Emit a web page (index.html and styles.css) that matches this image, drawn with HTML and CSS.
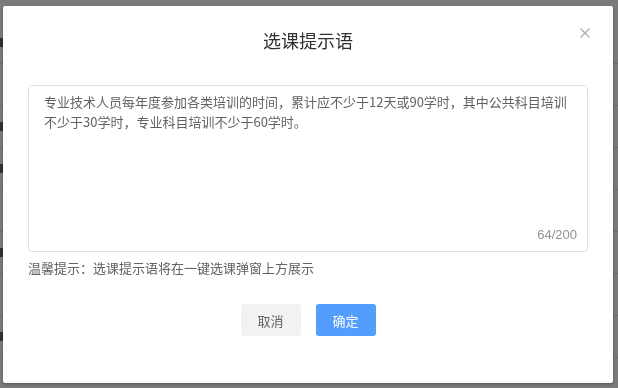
FILE: index.html
```html
<!DOCTYPE html>
<html lang="zh-CN">
<head>
  <meta charset="UTF-8" />
  <title>选课提示语</title>
  <link rel="stylesheet" href="styles.css">
</head>
<body>

  <div class="page">
    <div class="row"><i class="mark"></i></div>
    <div class="row"></div>
    <div class="row"><i class="mark"></i></div>
    <div class="row"><i class="mark"></i></div>
    <div class="row"></div>
    <div class="row"><i class="mark"></i></div>
    <div class="row"></div>
    <div class="row"><i class="mark"></i></div>
  </div>

  <div class="overlay">
    <div class="dialog">
      <div class="dialog-header">
        <span class="dialog-title">选课提示语</span>
        <button class="close-btn" aria-label="关闭">
          <svg width="10" height="10" viewBox="0 0 10 10">
            <path d="M0.5 0.5 L9.5 9.5 M9.5 0.5 L0.5 9.5" stroke="#a8abb2" stroke-width="1.2" fill="none"/>
          </svg>
        </button>
      </div>

      <div class="dialog-body">
        <div class="textarea-wrap">
          <textarea class="tip-input" maxlength="200">专业技术人员每年度参加各类培训的时间，累计应不少于12天或90学时，其中公共科目培训不少于30学时，专业科目培训不少于60学时。</textarea>
          <span class="count">64/200</span>
        </div>
        <p class="hint">温馨提示：选课提示语将在一键选课弹窗上方展示</p>
      </div>

      <div class="dialog-footer">
        <button class="btn btn-cancel">取消</button>
        <button class="btn btn-primary">确定</button>
      </div>
    </div>
  </div>

</body>
</html>
```

FILE: styles.css
```css
    body {
      margin: 0;
      height: 100vh;
      overflow: hidden;
      background-color: #ffffff;
      font-family: "Noto Sans CJK SC", "Noto Sans", sans-serif;
      color: #606266;
    }

    .page {
      height: 100vh;
      overflow: hidden;
      padding-top: 22px;
      box-sizing: border-box;
    }

    .row {
      height: 41px;
      border-bottom: 1px solid #e0e0e0;
      display: flex;
      align-items: center;
      justify-content: space-between;
    }

    .mark {
      width: 3px;
      height: 9px;
      background-color: #666;
    }

    .overlay {
      position: fixed;
      top: 0;
      left: 0;
      width: 100%;
      height: 100%;
      background: rgba(0, 0, 0, 0.52);
      display: flex;
      justify-content: flex-start;
      align-items: flex-start;
      padding: 6px 0 0 3px;
      box-sizing: border-box;
    }

    .dialog {
      width: 610px;
      height: 377px;
      background-color: #ffffff;
      border-radius: 2px;
      box-shadow: 0 1px 3px rgba(0, 0, 0, 0.3);
      box-sizing: border-box;
      display: flex;
      flex-direction: column;
    }

    .dialog-header {
      position: relative;
      padding: 20px 25px 0;
      height: 79px;
      box-sizing: border-box;
      text-align: center;
    }

    .dialog-title {
      font-size: 18px;
      line-height: 28px;
      color: #303133;
    }

    .close-btn {
      position: absolute;
      top: 22px;
      right: 23px;
      width: 10px;
      height: 10px;
      padding: 0;
      border: none;
      background: transparent;
      display: flex;
    }

    .dialog-body {
      padding: 0 25px;
    }

    .textarea-wrap {
      position: relative;
    }

    .tip-input {
      display: block;
      width: 100%;
      height: 167px;
      box-sizing: border-box;
      padding: 6px 15px;
      border: 1px solid #dcdfe6;
      border-radius: 4px;
      resize: none;
      font-family: "Noto Sans CJK SC", "Noto Sans", sans-serif;
      font-size: 13px;
      line-height: 20px;
      color: #606266;
      outline: none;
    }

    .count {
      position: absolute;
      right: 11px;
      bottom: 9px;
      font-size: 13px;
      line-height: 16px;
      color: #909399;
      font-family: "Liberation Sans", "Noto Sans CJK SC", sans-serif;
    }

    .hint {
      margin: 6px 0 0;
      font-size: 13px;
      line-height: 20px;
      color: #606266;
    }

    .dialog-footer {
      margin-top: 26px;
      display: flex;
      justify-content: center;
      gap: 15px;
    }

    .btn {
      width: 60px;
      height: 32px;
      border: none;
      border-radius: 3px;
      font-family: "Noto Sans CJK SC", "Noto Sans", sans-serif;
      font-size: 13px;
      padding: 0;
    }

    .btn-cancel {
      background-color: #f2f2f2;
      color: #606266;
    }

    .btn-primary {
      background-color: #539dfd;
      color: #ffffff;
    }
```
